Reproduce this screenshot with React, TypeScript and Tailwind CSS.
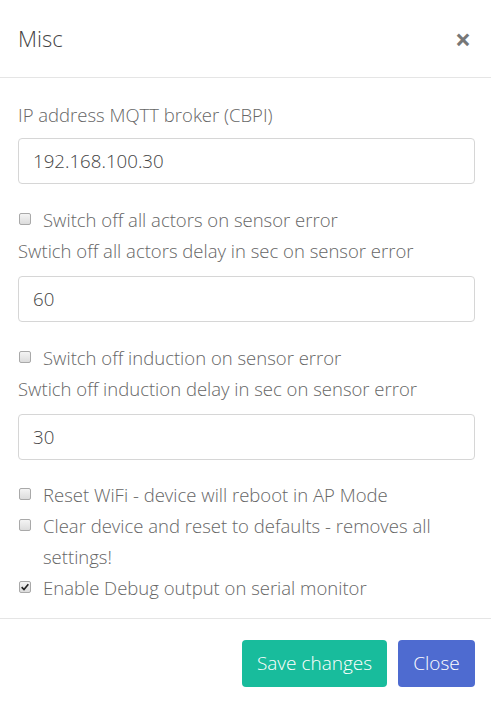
import React from 'react';

const font = { fontFamily: '"Open Sans", "Noto Sans", sans-serif' };

function Check({ checked = false }: { checked?: boolean }) {
  return (
    <span className="mt-[9px] mr-[12px] ml-[1px] flex h-[12px] w-[12px] shrink-0 items-center justify-center rounded-[2px] border border-[#a9a9a9] bg-gradient-to-b from-[#f4f4f4] to-[#dcdcdc]">
      {checked && (
        <svg viewBox="0 0 12 12" className="h-[10px] w-[10px]">
          <path d="M2 6.2 L4.8 9 L10 2.8" fill="none" stroke="#222" strokeWidth="2" />
        </svg>
      )}
    </span>
  );
}

function CheckRow({ label, checked }: { label: string; checked?: boolean }) {
  return (
    <label className="flex items-start leading-[31px]">
      <Check checked={checked} />
      <span>{label}</span>
    </label>
  );
}

function Field({ label, value }: { label: string; value: string }) {
  return (
    <div>
      <div className="leading-[31px]">{label}</div>
      <div className="mt-[10px] flex h-[46px] items-center rounded-[4px] border border-[#d6d6d6] px-[14px] text-[18.7px] text-[#444]">
        {value}
      </div>
    </div>
  );
}

export default function App() {
  return (
    <div className="h-[703px] w-[491px] overflow-hidden bg-white text-[18.5px] font-light text-[#666]" style={font}>
      <div className="flex h-[78px] items-center justify-between border-b border-[#e5e5e5] pl-[18px] pr-[20px]">
        <h4 className="text-[22px] font-light text-[#444]">Misc</h4>
        <span className="text-[28px] font-bold leading-none text-[#777]">×</span>
      </div>

      <div className="pl-[18px] pr-[16px] pt-[21px] pb-[15px]">
        <div>
          <div className="leading-[31px]">IP address MQTT broker (CBPI)</div>
          <div className="mt-[8px] flex h-[46px] items-center rounded-[4px] border border-[#d6d6d6] px-[14px] text-[18.7px] text-[#444]">
            192.168.100.30
          </div>
        </div>
        <div className="mt-[20px]">
          <CheckRow label="Switch off all actors on sensor error" />
        </div>
        <Field label="Swtich off all actors delay in sec on sensor error" value="60" />
        <div className="mt-[20px]">
          <CheckRow label="Switch off induction on sensor error" />
        </div>
        <Field label="Swtich off induction delay in sec on sensor error" value="30" />
        <div className="mt-[19px] flex flex-col">
          <CheckRow label="Reset WiFi - device will reboot in AP Mode" />
          <CheckRow label="Clear device and reset to defaults - removes all settings!" />
          <CheckRow label="Enable Debug output on serial monitor" checked />
        </div>
      </div>

      <div className="flex justify-end gap-[11px] border-t border-[#e5e5e5] pr-[16px] pt-[21px]">
        <button className="h-[47px] w-[145px] rounded-[4px] bg-[#18bc9c] text-[19px] font-light text-white">
          Save changes
        </button>
        <button className="h-[47px] w-[77px] rounded-[4px] bg-[#4e6bd0] text-[19px] font-light text-white">
          Close
        </button>
      </div>
    </div>
  );
}
